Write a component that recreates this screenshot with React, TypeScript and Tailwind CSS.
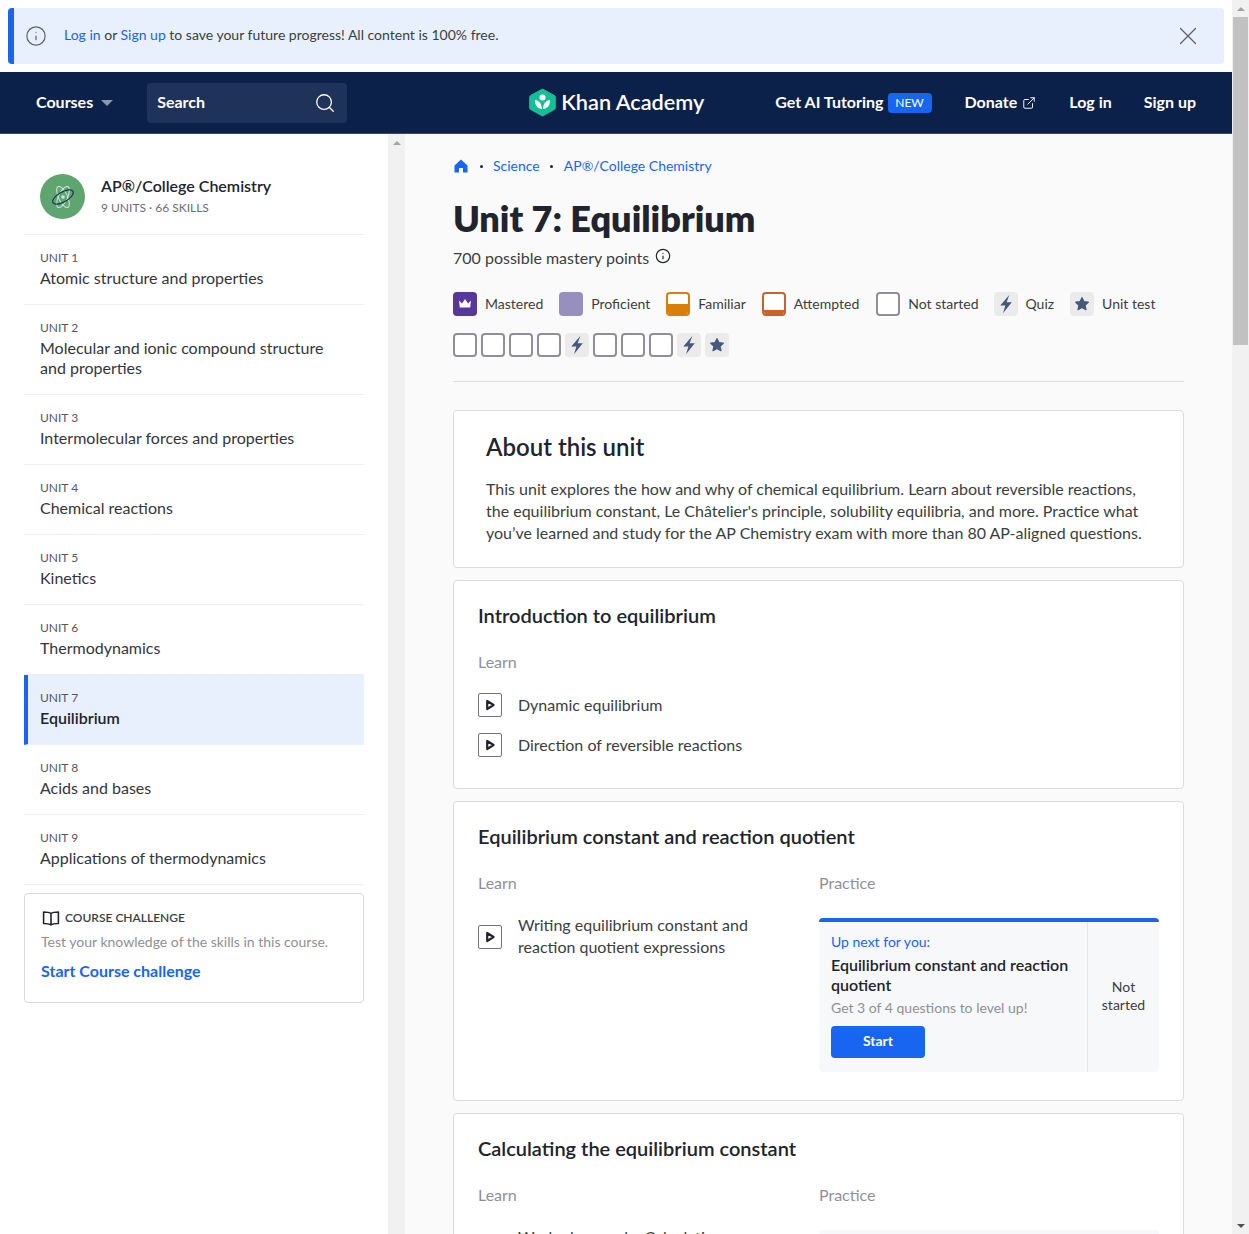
import { Info, X, Search, ExternalLink } from 'lucide-react';

const units = [
  { label: 'UNIT 1', title: 'Atomic structure and properties' },
  { label: 'UNIT 2', title: 'Molecular and ionic compound structure and properties' },
  { label: 'UNIT 3', title: 'Intermolecular forces and properties' },
  { label: 'UNIT 4', title: 'Chemical reactions' },
  { label: 'UNIT 5', title: 'Kinetics' },
  { label: 'UNIT 6', title: 'Thermodynamics' },
  { label: 'UNIT 7', title: 'Equilibrium', active: true },
  { label: 'UNIT 8', title: 'Acids and bases' },
  { label: 'UNIT 9', title: 'Applications of thermodynamics' },
];

function Bolt() {
  return (
    <svg width="20" height="20" viewBox="0 0 16 16" fill="#46587c">
      <path d="M10.6 0.8 3.4 9.2h4.1L5.6 15.4l7-8.8H8.5z" />
    </svg>
  );
}

function Star() {
  return (
    <svg width="16" height="16" viewBox="0 0 16 16" fill="#46587c" stroke="#46587c" strokeWidth="1.4" strokeLinejoin="round">
      <path d="M8 1.8l1.9 4 4.3.5-3.2 3 .9 4.3L8 11.5l-3.9 2.1.9-4.3-3.2-3 4.3-.5z" />
    </svg>
  );
}

function EmptyBox() {
  return <span className="block h-6 w-6 rounded-[4px] border-2 border-[#8f9096] bg-white" />;
}

function IconBox({ children }: { children: React.ReactNode }) {
  return <span className="flex h-6 w-6 items-center justify-center rounded-[4px] bg-[#ebebec]">{children}</span>;
}

function Legend({ icon, label }: { icon: React.ReactNode; label: string }) {
  return (
    <div className="flex items-center gap-2">
      {icon}
      <span className="text-sm text-[#3b3e40]">{label}</span>
    </div>
  );
}

function PlayBox() {
  return (
    <span className="flex h-6 w-6 shrink-0 items-center justify-center rounded-[2px] border border-[#73757c] bg-white">
      <svg width="12" height="12" viewBox="0 0 12 12">
        <path d="M3.2 2 9.6 6 3.2 10z" fill="#fff" stroke="#21242c" strokeWidth="2.2" strokeLinejoin="round" />
      </svg>
    </span>
  );
}

function Lesson({ title }: { title: string }) {
  return (
    <div className="flex h-10 items-center gap-4 text-base text-[#3b3e40]">
      <PlayBox />
      <span>{title}</span>
    </div>
  );
}

function CrumbDot() {
  return <span className="block h-[3px] w-[3px] rounded-full bg-[#21242c]" />;
}

export default function App() {
  return (
    <div className="flex h-[1234px] w-[1249px] overflow-hidden bg-white font-['Lato','Liberation_Sans',sans-serif] text-[#21242c]">
      <div className="flex h-full w-[1232px] flex-col">
        {/* Sign in banner */}
        <div className="bg-white p-2">
          <div className="flex h-14 items-center rounded-[4px] border-l-[6px] border-[#1865f2] bg-[#e9f0fd] pl-[11px] pr-[21px]">
            <Info size={22} strokeWidth={1.3} className="text-[#5d5f66]" />
            <p className="mb-0.5 ml-[17px] flex-1 text-sm text-[#3b3e40]">
              <span className="text-[#1865f2]">Log in</span> or <span className="text-[#1865f2]">Sign up</span> to save your future progress! All content is 100% free.
            </p>
            <X size={30} strokeWidth={1} className="text-[#5d5f66]" />
          </div>
        </div>

        {/* Top nav */}
        <div className="flex h-[62px] items-center border-b border-[#3b4a6b] bg-[#0c2149] pl-9 pr-9 text-white">
          <span className="mb-0.5 text-base font-bold">Courses</span>
          <span className="ml-2 h-0 w-0 border-x-[6px] border-t-[6px] border-x-transparent border-t-[#8d97ab]" />
          <div className="ml-[34px] flex h-10 w-[200px] items-center justify-between rounded-[4px] bg-[#1f3259] pl-2.5 pr-[11px]">
            <span className="mb-0.5 text-base font-bold">Search</span>
            <Search size={22} strokeWidth={1.4} />
          </div>
          <div className="ml-[182px] flex items-center gap-[5px]">
            <svg width="27" height="29" viewBox="0 0 27 29">
              <path d="M13.5 1 25.5 7.6a1.6 1.6 0 0 1 .8 1.4v11a1.6 1.6 0 0 1-.8 1.4L13.5 28 1.5 21.4a1.6 1.6 0 0 1-.8-1.4V9a1.6 1.6 0 0 1 .8-1.4z" fill="#14bf96" stroke="#14bf96" strokeLinejoin="round" />
              <circle cx="13.5" cy="9.5" r="3" fill="#fff" />
              <path d="M6 12c3.8.4 6.6 3 7 9-4.2-.2-7.2-3.4-7-9zM21 12c-3.8.4-6.6 3-7 9 4.2-.2 7.2-3.4 7-9z" fill="#fff" />
            </svg>
            <span className="text-[21.7px] font-semibold leading-none">Khan Academy</span>
          </div>
          <div className="ml-auto flex items-center">
            <span className="mb-0.5 text-base font-bold">Get AI Tutoring</span>
            <span className="ml-1 flex h-5 w-[44px] items-center justify-center rounded-[4px] bg-[#1865f2] text-xs">NEW</span>
            <span className="mb-0.5 ml-[33px] text-base font-bold">Donate</span>
            <ExternalLink size={14} strokeWidth={1.6} className="ml-[5px]" />
            <span className="mb-0.5 ml-[33px] text-base font-bold">Log in</span>
            <span className="mb-0.5 ml-8 text-base font-bold">Sign up</span>
          </div>
        </div>

        <div className="flex min-h-0 flex-1">
          {/* Course sidebar */}
          <aside className="w-[388px] shrink-0 bg-white px-6">
            <div className="flex h-[101px] items-center gap-4 border-b border-[#eeeeef] px-4 pt-[25px]">
              <span className="flex h-[45px] w-[45px] shrink-0 items-center justify-center rounded-full bg-[#5fa56f]">
                <svg width="26" height="26" viewBox="0 0 26 26" fill="none" strokeWidth="1">
                  <ellipse cx="13" cy="13" rx="4.5" ry="11.5" transform="rotate(-25 13 13)" stroke="#cfe6d3" />
                  <ellipse cx="13" cy="13" rx="4.5" ry="11.5" transform="rotate(25 13 13)" stroke="#cfe6d3" />
                  <ellipse cx="13" cy="13" rx="11.5" ry="5" transform="rotate(-30 13 13)" stroke="#17315c" strokeWidth="1.2" />
                  <circle cx="13" cy="13" r="1.8" fill="#cfe6d3" />
                </svg>
              </span>
              <div className="mb-0.5">
                <div className="text-base font-semibold leading-5">AP®/College Chemistry</div>
                <div className="mt-1 text-xs leading-4 text-[#6b6d73]">9 UNITS · 66 SKILLS</div>
              </div>
            </div>
            {units.map((u) =>
              u.active ? (
                <div key={u.label} className="h-[70px] border-b border-l-4 border-[#eeeeef] border-l-[#1865f2] bg-[#e9f0fd] pb-4 pl-3 pr-4 pt-[15px]">
                  <div className="text-xs leading-4 text-[#55575e]">{u.label}</div>
                  <div className="mt-0.5 text-base font-semibold leading-5">{u.title}</div>
                </div>
              ) : (
                <div key={u.label} className="border-b border-[#eeeeef] px-4 pb-4 pt-[15px]">
                  <div className="text-xs leading-4 text-[#55575e]">{u.label}</div>
                  <div className="mt-0.5 text-base leading-5 text-[#33363c]">{u.title}</div>
                </div>
              ),
            )}
            <div className="mt-2 h-[110px] rounded-[4px] border border-[#d9d9db] px-4 pt-[14px]">
              <div className="flex items-center gap-1">
                <svg width="20" height="20" viewBox="0 0 20 20" fill="none" stroke="#21242c" strokeWidth="1.6" strokeLinejoin="round">
                  <path d="M10 5.5C8.5 4.3 6 4 2.6 4v11.5c3.4 0 5.9.3 7.4 1.5 1.5-1.2 4-1.500 7.400-1.500V4C14 4 11.500 4.300 10 5.500zM10 5.500V17" />
                </svg>
                <span className="text-xs font-semibold text-[#3b3e40]">COURSE CHALLENGE</span>
              </div>
              <p className="mt-1 text-sm text-[#8f9096]">Test your knowledge of the skills in this course.</p>
              <p className="mt-[7px] text-base font-bold text-[#1865f2]">Start Course challenge</p>
            </div>
          </aside>

          {/* Sidebar scrollbar */}
          <div className="flex w-[17px] shrink-0 justify-center bg-[#f1f1f1] pt-[7px]">
            <span className="h-0 w-0 border-x-[4px] border-b-[4px] border-x-transparent border-b-[#a3a3a3]" />
          </div>

          {/* Unit content */}
          <main className="min-w-0 flex-1 overflow-hidden bg-[#fafafa] px-12 pt-6">
            <div className="flex items-center text-sm leading-4 text-[#1865f2]">
              <svg width="16" height="16" viewBox="0 0 16 16" fill="#1865f2">
                <path d="M8 1.5 14.5 7.5V14.5H10V10H6V14.5H1.5V7.5z" />
              </svg>
              <span className="ml-[11px] mr-[10px]"><CrumbDot /></span>
              <span>Science</span>
              <span className="ml-[10px] mr-[11px]"><CrumbDot /></span>
              <span>AP®/College Chemistry</span>
            </div>
            <h1 className="mt-6 text-[36px] font-extrabold leading-10">Unit 7: Equilibrium</h1>
            <div className="mt-2.5 flex items-center gap-[6px] text-base leading-5 text-[#3b3e40]">
              <span>700 possible mastery points</span>
              <Info size={16} strokeWidth={1.8} className="mb-1 text-[#21242c]" />
            </div>
            <div className="mt-[24px] flex items-center gap-4">
              <Legend
                label="Mastered"
                icon={
                  <span className="flex h-6 w-6 items-center justify-center rounded-[4px] bg-[#56389b]">
                    <svg width="14" height="12" viewBox="0 0 14 12" fill="#fff">
                      <path d="M1 2.5 4 5.5 7 1l3 4.5 3-3-.8 7H1.8z" />
                    </svg>
                  </span>
                }
              />
              <Legend label="Proficient" icon={<span className="block h-6 w-6 rounded-[4px] bg-[#9790bf]" />} />
              <Legend
                label="Familiar"
                icon={
                  <span className="flex h-6 w-6 flex-col overflow-hidden rounded-[4px] border-2 border-[#d97d0d] bg-white">
                    <span className="mt-auto h-[10px] bg-[#d97d0d]" />
                  </span>
                }
              />
              <Legend
                label="Attempted"
                icon={
                  <span className="flex h-6 w-6 flex-col overflow-hidden rounded-[4px] border-2 border-[#c9632a] bg-white">
                    <span className="mt-auto h-[4px] bg-[#c9632a]" />
                  </span>
                }
              />
              <div className="-mr-px ml-px">
                <Legend label="Not started" icon={<EmptyBox />} />
              </div>
              <Legend label="Quiz" icon={<IconBox><Bolt /></IconBox>} />
              <Legend label="Unit test" icon={<IconBox><Star /></IconBox>} />
            </div>
            <div className="mt-[17px] flex gap-1 border-b border-[#dcdcdd] pb-6">
              <EmptyBox />
              <EmptyBox />
              <EmptyBox />
              <EmptyBox />
              <IconBox><Bolt /></IconBox>
              <EmptyBox />
              <EmptyBox />
              <EmptyBox />
              <IconBox><Bolt /></IconBox>
              <IconBox><Star /></IconBox>
            </div>

            <section className="mt-7 h-[158px] rounded-[4px] border border-[#dcdcdd] bg-white px-8 pt-[22px]">
              <h2 className="text-2xl font-semibold leading-7">About this unit</h2>
              <p className="mt-[17px] text-base leading-[22px] text-[#3b3e40]">
                This unit explores the how and why of chemical equilibrium. Learn about reversible reactions, the equilibrium constant, Le Châtelier's principle, solubility equilibria, and more. Practice what you’ve learned and study for the AP Chemistry exam with more than 80 AP-aligned questions.
              </p>
            </section>

            <section className="mt-3 h-[209px] rounded-[4px] border border-[#dcdcdd] bg-white px-6 pt-[22px]">
              <h3 className="text-xl font-semibold leading-6">Introduction to equilibrium</h3>
              <div className="mt-[25px] text-base leading-5 text-[#8f9096]">Learn</div>
              <div className="mt-[13px]">
                <Lesson title="Dynamic equilibrium" />
                <Lesson title="Direction of reversible reactions" />
              </div>
            </section>

            <section className="mt-3 h-[300px] rounded-[4px] border border-[#dcdcdd] bg-white px-6 pt-[22px]">
              <h3 className="text-xl font-semibold leading-6">Equilibrium constant and reaction quotient</h3>
              <div className="mt-[25px] flex gap-[23px]">
                <div className="w-[318px] shrink-0">
                  <div className="text-base leading-5 text-[#8f9096]">Learn</div>
                  <div className="mt-[21px] flex items-center gap-4 text-base leading-[22px] text-[#3b3e40]">
                    <span className="mt-0.5"><PlayBox /></span>
                    <span>Writing equilibrium constant and reaction quotient expressions</span>
                  </div>
                </div>
                <div className="flex-1">
                  <div className="text-base leading-5 text-[#8f9096]">Practice</div>
                  <div className="mt-[25px] flex h-[154px] overflow-hidden rounded-[4px] border-t-4 border-[#1865f2] bg-[#f7f8fa]">
                    <div className="w-[269px] border-r border-[#e5e6e8] pl-3 pt-2.5">
                      <div className="text-sm leading-5 text-[#1865f2]">Up next for you:</div>
                      <div className="mt-[3px] text-base font-semibold leading-5">Equilibrium constant and reaction quotient</div>
                      <div className="mt-[3px] text-sm leading-5 text-[#8f9096]">Get 3 of 4 questions to level up!</div>
                      <div className="mt-2 flex h-8 w-[94px] items-center justify-center rounded-[4px] bg-[#1865f2] pb-0.5 text-sm font-bold text-white">Start</div>
                    </div>
                    <div className="flex flex-1 items-center justify-center px-3 pb-0.5 text-center text-sm leading-[18px] text-[#3b3e40]">Not started</div>
                  </div>
                </div>
              </div>
            </section>

            <section className="mt-3 h-[300px] rounded-[4px] border border-[#dcdcdd] bg-white px-6 pt-[22px]">
              <h3 className="text-xl font-semibold leading-6">Calculating the equilibrium constant</h3>
              <div className="mt-[25px] flex gap-[23px]">
                <div className="w-[318px] shrink-0">
                  <div className="text-base leading-5 text-[#8f9096]">Learn</div>
                  <div className="mt-[21px] flex items-center gap-4 text-base leading-[22px] text-[#3b3e40]">
                    <span className="mt-0.5"><PlayBox /></span>
                    <span>Worked example: Calculating equilibrium constants</span>
                  </div>
                </div>
                <div className="flex-1">
                  <div className="text-base leading-5 text-[#8f9096]">Practice</div>
                  <div className="mt-[25px] h-[154px] rounded-[4px] bg-[#f7f8fa]" />
                </div>
              </div>
            </section>
          </main>
        </div>
      </div>

      {/* Page scrollbar */}
      <div className="flex h-full w-[17px] shrink-0 flex-col items-center bg-[#f1f1f1]">
        <div className="flex h-[17px] items-center">
          <span className="h-0 w-0 border-x-[4px] border-b-[4px] border-x-transparent border-b-[#a3a3a3]" />
        </div>
        <div className="h-[328px] w-[15px] bg-[#c1c1c1]" />
        <div className="mt-auto flex h-[17px] items-center">
          <span className="h-0 w-0 border-x-[4px] border-t-[4px] border-x-transparent border-t-[#505050]" />
        </div>
      </div>
    </div>
  );
}
